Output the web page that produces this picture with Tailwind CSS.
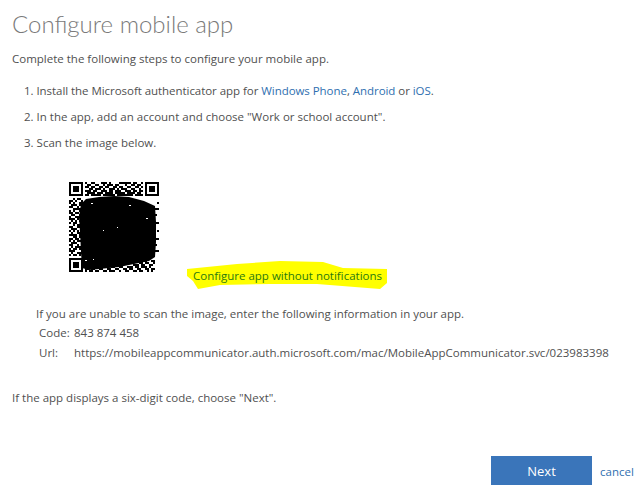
<!DOCTYPE html>
<html lang="en">
<head>
  <meta charset="UTF-8">
  <title>Configure mobile app</title>
  <script src="https://cdn.jsdelivr.net/npm/@tailwindcss/browser@4"></script>
</head>
<body class="bg-white h-[491px] overflow-hidden font-['Open_Sans',sans-serif] text-[11.5px] leading-[16px] text-[#505050]">
  <div class="px-3 pt-[8px] h-[491px]">
    <h1 class="text-[24px] leading-[32px] font-light font-['Lato',sans-serif] text-[#7a7a7a]">Configure mobile app</h1>
    <p class="mt-[11px]">Complete the following steps to configure your mobile app.</p>

    <ol class="mt-[16px] ml-[12px] space-y-[10px]">
      <li class="tracking-[-0.05px]">1. Install the Microsoft authenticator app for <a class="text-[#2f6fb0]">Windows Phone</a>, <a class="text-[#2f6fb0]">Android</a> or <a class="text-[#2f6fb0]">iOS</a>.</li>
      <li>2. In the app, add an account and choose "Work or school account".</li>
      <li>3. Scan the image below.</li>
    </ol>

    <div class="mt-[31px] ml-[57px] flex h-[102px]">
      <svg id="qr" class="w-[91px] h-[91px]" viewBox="0 0 91 91" shape-rendering="crispEdges"></svg>
      <div class="relative ml-[33px] self-end">
        <svg class="absolute left-[-6px] top-[-7px]" width="200" height="28" viewBox="0 0 200 28">
          <polygon fill="#ffff00" points="0,8 20,6 50,3 93,0 136,1 156,7 200,8 200,22 193,28 130,23 83,23 33,24 11,28 6,20 0,15"/>
        </svg>
        <a class="relative text-[#2a7a10]">Configure app without notifications</a>
      </div>
    </div>

    <div class="mt-[22px] ml-[24px]">
      <p>If you are unable to scan the image, enter the following information in your app.</p>
      <div class="mt-[3px] ml-[3px] flex">
        <span class="w-[35px]">Code:</span><span>843 874 458</span>
      </div>
      <div class="mt-[4px] ml-[3px] flex">
        <span class="w-[35px]">Url:</span><span>https://mobileappcommunicator.auth.microsoft.com/mac/MobileAppCommunicator.svc/023983398</span>
      </div>
    </div>

    <p class="mt-[29px]">If the app displays a six-digit code, choose "Next".</p>

    <div class="mt-[50px] flex justify-end items-end pr-[-3px]">
      <button class="w-[101px] h-[29px] bg-[#3a75ba] text-white text-[13px]">Next</button>
      <a class="ml-2 mb-[5px] w-[30px] whitespace-nowrap text-[#2f6fb0]">cancel</a>
    </div>
  </div>

  <script>
    // modules are 2px, 45 x 45
    const top_band = [
      "10011000111010000111111011001",
      "01100110010111011000100110110",
      "11011001101100110110011001101",
      "00110111010011101011100110010",
      "11101100111011011100111011011",
      "01111011101111011111011110110",
      "11011111011111101111111101111"
    ];
    const left_band = [
      "0010110","1101001","1010011","0111010","1100101","0011110","1010010","1101101",
      "0110011","1001110","1110100","0101011","1011001","0010111","1100110","0111001",
      "1010101","0100110","1111010","0011011","1101100","1010111","0111001","1100100",
      "0101110","1011011","1110001","0100111","1011010","0000000"
    ];
    const bottom_band = [
      "00000000000000000000000000000000000",
      "00000000000000000000000000000110011",
      "00000000000000000000000000011011001",
      "00000000000000000000000011101100110",
      "01100000000001100110011101101110100",
      "11011001100110011001101100110011011",
      "10110110011011100100110011011001010"
    ];
    const right_rows = { 10: "001", 13: "011", 16: "010", 20: "011", 24: "001", 28: "011", 31: "010", 34: "011" };

    let d = "";
    const cell = (x, y) => { d += `M${x*2} ${y*2}h2v2h-2z`; };
    const finder = (x, y) => {
      for (let i = 0; i < 7; i++) for (let j = 0; j < 7; j++) {
        const ring = i == 0 || i == 6 || j == 0 || j == 6;
        const core = i >= 2 && i <= 4 && j >= 2 && j <= 4;
        if (ring || core) cell(x + i, y + j);
      }
    };
    finder(0, 0); finder(38, 0); finder(0, 38);
    top_band.forEach((r, y) => [...r].forEach((c, x) => { if (c == "1") cell(x + 8, y); }));
    left_band.forEach((r, y) => [...r].forEach((c, x) => { if (c == "1") cell(x, y + 8); }));
    bottom_band.forEach((r, y) => [...r].forEach((c, x) => { if (c == "1") cell(x + 8, y + 38); }));
    for (const y in right_rows) [...right_rows[y]].forEach((c, x) => { if (c == "1") cell(x + 42, +y); });

    // scribbled-out middle of the code
    document.getElementById("qr").innerHTML =
      `<path fill="#000" d="${d}"/>` +
      `<polygon fill="#000" shape-rendering="auto" points="17,17 30,15 45,14 60,15 75,19 86,24 87,40 87,60 86,75 80,79 70,81 50,85 30,87 20,88 13,86 12,70 11,50 10,35 12,22"/>` +
      `<path fill="#fff" d="M22 21h2v1h-2zM60 23h2v1h-2zM77 36h2v1h-2zM48 45h1v1h-1zM34 48h1v1h-1zM16 78h2v1h-2zM24 77h1v1h-1z"/>`;
  </script>
</body>
</html>
